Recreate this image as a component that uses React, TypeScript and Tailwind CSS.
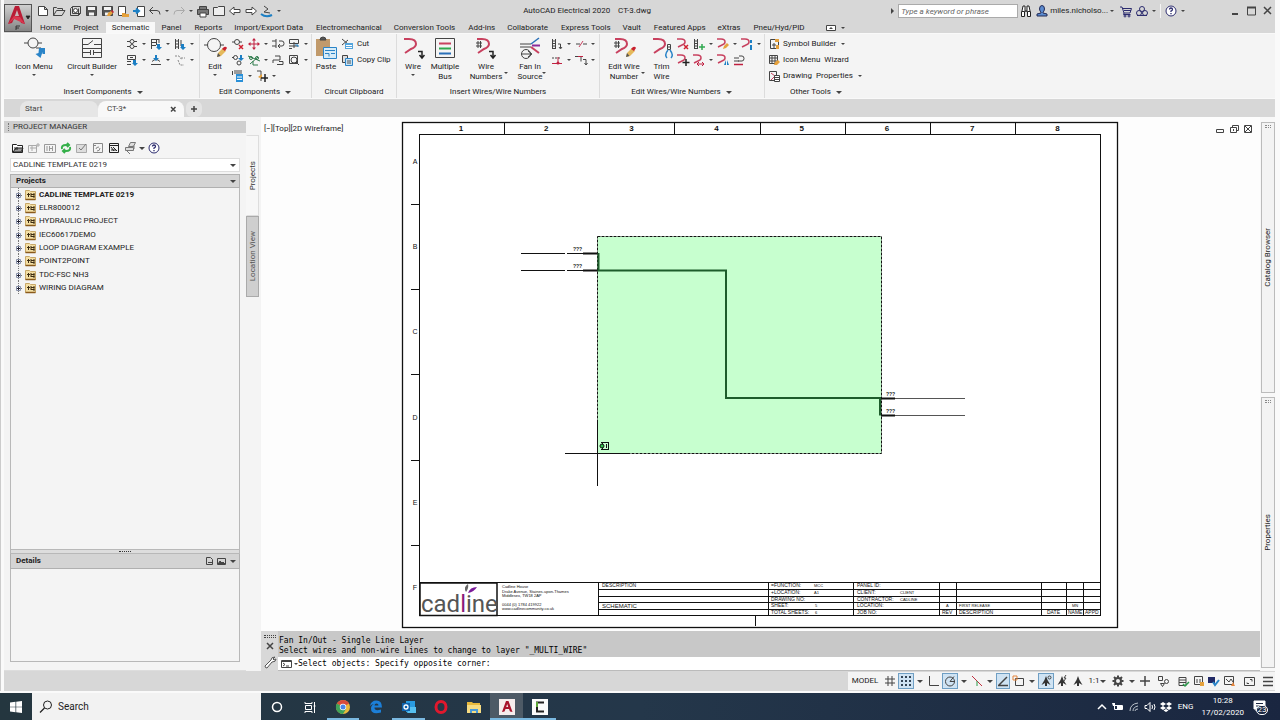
import type { ReactNode } from 'react';
import clsx from 'clsx';

type IconProps = { children: ReactNode; size?: 'sm' | 'lg'; stroke?: string };

const Icon = ({ children, size = 'sm', stroke = '#444' }: IconProps) => (
   <svg
      viewBox={size === 'sm' ? '0 0 16 16' : '0 0 24 24'}
      className={clsx('shrink-0', size === 'sm' ? 'size-4' : 'size-6')}
      fill="none"
      stroke={stroke}
      strokeWidth="1"
      aria-hidden="true"
   >
      {children}
   </svg>
);

const Caret = ({ className = 'w-2', large }: { className?: string; large?: boolean }) => (
   <span className={clsx('flex shrink-0 items-center justify-center', className)}>
      <svg
         viewBox="0 0 6 3"
         className={clsx(large ? 'h-[3px] w-1.5' : 'h-0.5 w-1')}
         fill="#444"
         aria-hidden="true"
      >
         <path d="M0 0h6L3 3z" />
      </svg>
   </span>
);

/* ---------- shared icon parts ---------- */

const pencil = (
   <g stroke="none">
      <path d="M14 21l1-4 5-5 3 3-5 5z" fill="#e5b95c" />
      <path d="M14 21l1-4 2.500 3z" fill="#555" />
      <path d="M19 13l2-2q2-1 3 1l-2 3z" fill="#c8202f" />
   </g>
);

const redWire = (
   <path d="M3 3h5q7 0 7 5 0 3-5 5l-6 4" stroke="#c8415f" strokeWidth="2" />
);

const miniWire = <path d="M2 3h4q4 0 4 3 0 2-3 3l-4 2" stroke="#c8415f" strokeWidth="1.500" />;

const folderIcon = (
   <g>
      <path d="M2.500 3.500h4l1 1h5v8h-10z" fill="#f4dfa4" stroke="#c8a868" />
      <path d="M2.500 12.500h10" stroke="#8a5a1c" strokeWidth="1.500" />
      <path d="M4 7.500h3M5.500 6v4M8 6v4M8 7.500h3.500M8 9.500h3.500M11 6v5" stroke="#3d2c12" />
   </g>
);

const helpIcon = (
   <g stroke="#2c2c6e">
      <circle cx="8" cy="8" r="5" fill="#fff" />
      <path d="M6.500 6.500q0-1.500 1.500-1.500t1.500 1.500q0 1-1.500 1.500v1M8 10v1.200" strokeWidth="1.300" />
   </g>
);

/* ---------- quick access toolbar ---------- */

const quickAccess: { label: string; icon: ReactNode; caret?: boolean }[] = [
   { label: 'New', icon: <path d="M3.500 3.500h6l3 3v6h-9zM9.500 3.500v3h3" fill="#fff" /> },
   { label: 'Open', icon: <path d="M2.500 12.500v-8h3l1 1h5v2M2.500 12.500l3-5h8.500l-3 5z" /> },
   {
      label: 'Project',
      icon: (
         <g>
            <path d="M3.500 5.500l2-2h8v7l-2 2h-8zM11.500 5.500v7M5.500 3.500v7h8" />
            <circle cx="8.500" cy="7.500" r="2" fill="#fff" />
         </g>
      ),
   },
   {
      label: 'Save',
      icon: (
         <g>
            <path d="M3.500 3.500h10v9h-10z" fill="#555" />
            <path d="M5 4h7v3H5zM6 9.500h5v3H6z" fill="#f4f4f4" stroke="none" />
         </g>
      ),
   },
   {
      label: 'Save As',
      icon: (
         <g>
            <path d="M3.500 3.500h10v9h-10z" fill="#555" />
            <path d="M5 4h7v3H5zM6 9.500h5v3H6z" fill="#f4f4f4" stroke="none" />
            <path d="M8 13l1-3 3-2 2 2-3 3z" fill="#e5a13c" stroke="none" />
            <path d="M12 8l1-1 2 2-1 1z" fill="#c8202f" stroke="none" />
         </g>
      ),
   },
   {
      label: 'Open from Web',
      icon: (
         <g>
            <path d="M3.500 3.500h7v9h-7z" fill="#fff" />
            <path d="M7 10h3l1 1h3v3H7z" fill="#e5a13c" stroke="none" />
         </g>
      ),
   },
   {
      label: 'Save to Web',
      icon: (
         <g>
            <path d="M6.500 3.500h7v10h-7z" fill="#fff" />
            <path d="M2 8h5M5 5.500L8 8l-3 2.500" stroke="#1c7fc4" strokeWidth="2" />
         </g>
      ),
   },
   { label: 'Undo', icon: <path d="M3 7.500h7q3 0 3 4M6 4L2.500 7.500 6 11" />, caret: true },
   { label: 'Redo', icon: <path d="M13 7.500H6q-3 0-3 4M10 4l3.500 3.500L10 11" stroke="#aaa" />, caret: true },
   {
      label: 'Plot',
      icon: (
         <g>
            <path d="M4.500 3.500h7v3h-7zM2.500 6.500h11v5h-11z" fill="#777" />
            <path d="M5 10h6v4H5z" fill="#fff" />
         </g>
      ),
   },
   { label: 'Folder', icon: <path d="M2.500 12.500v-8h4l1-1h6v9z" fill="#eee" /> },
   { label: 'Previous', icon: <path d="M2.500 8L7 4v2.500h6v3H7V12z" fill="#fff" /> },
   { label: 'Next', icon: <path d="M13.500 8L9 4v2.500H3v3h6V12z" fill="#fff" /> },
   {
      label: 'Surfer',
      icon: (
         <g>
            <path d="M5 3l4 3-4 3 6 1" />
            <path d="M2 11q5 4 11 1" stroke="#1c7fc4" strokeWidth="2" />
         </g>
      ),
      caret: true,
   },
];

const menuTabs = [
   'Home',
   'Project',
   'Schematic',
   'Panel',
   'Reports',
   'Import/Export Data',
   'Electromechanical',
   'Conversion Tools',
   'Add-ins',
   'Collaborate',
   'Express Tools',
   'Vault',
   'Featured Apps',
   'eXtras',
   'Pneu/Hyd/PID',
];

const AppButton = () => (
   <button
      aria-label="Application menu"
      className="flex h-7 w-7 shrink-0 items-center justify-center border border-[#555] bg-linear-to-b from-[#d0d0d0] to-[#858585]"
   >
      <svg viewBox="0 0 26 26" className="size-[26px]" aria-hidden="true">
         <path d="M3 19L10 1h4l6 18-4-1-1.500-4H9l-2 4z" fill="#b91c35" />
         <path d="M9.800 11L12 5l2 6z" fill="#c9b5b8" />
         <path d="M3 19l6-5 11 5-5-7-6-1z" fill="#d93850" />
         <path d="M21 11h4l-2 3zM11 21h4M11 21v4M11 23h3" fill="#222" stroke="#222" strokeWidth=".8" />
      </svg>
   </button>
);

function Header() {
   return (
      <header className="flex items-start bg-[#d7d7d7] pt-1">
         <AppButton />
         <div className="min-w-0 flex-1">
            <div className="flex h-3.5 items-center">
               <div className="flex pl-[3px]">
                  {quickAccess.map((q) => (
                     <button key={q.label} aria-label={q.label} className="flex items-center">
                        <Icon>{q.icon}</Icon>
                        {q.caret && <Caret />}
                     </button>
                  ))}
               </div>
               <h1 className="flex-1 whitespace-pre text-center">AutoCAD Electrical 2020    CT-3.dwg</h1>
               <div className="flex items-center">
                  <svg viewBox="0 0 3 6" className="mr-1 h-1.5 w-[3px]" fill="#444" aria-hidden="true">
                     <path d="M0 0v6l3-3z" />
                  </svg>
                  <input
                     aria-label="Search help"
                     placeholder="Type a keyword or phrase"
                     className="h-3.5 w-[120px] border border-[#aaa] bg-white px-0.5 italic placeholder:text-[#666]"
                  />
                  <button aria-label="Find" className="flex">
                     <Icon stroke="#222">
                        <path d="M3.500 8.500h3v5h-3zM9.500 8.500h3v5h-3zM4 8l1-5h2v6M12 8l-1-5H9v6M7 8h2" fill="#fff" />
                     </Icon>
                  </button>
                  <button className="flex items-center">
                     <Icon stroke="#222a55">
                        <path d="M5.500 6q0-3.500 2.500-3.500T10.500 6Q10 9 9 9v1l4 1v2H3v-2l4-1V9Q6 9 5.500 6z" fill="#5b8bd0" />
                     </Icon>
                     miles.nicholso...
                     <Caret />
                  </button>
                  <button aria-label="App store" className="ml-0.5 flex">
                     <Icon stroke="#2c2c6e">
                        <path d="M2 4h2l2 6h6l1.500-4.500H5M6 7.500h7M6 10l-.5 1.500h7" />
                        <circle cx="7" cy="13" r="1" />
                        <circle cx="11" cy="13" r="1" />
                     </Icon>
                  </button>
                  <button aria-label="Autodesk apps" className="flex">
                     <Icon stroke="#2c2c6e">
                        <circle cx="8" cy="6" r="2.500" />
                        <circle cx="5" cy="10" r="2.500" />
                        <circle cx="11" cy="10" r="2.500" />
                        <path d="M3 12.500h10" />
                     </Icon>
                     <Caret />
                  </button>
                  <span className="mx-0.5 h-3.5 w-px bg-[#f4f4f4]" />
                  <button aria-label="Help" className="flex">
                     <Icon>{helpIcon}</Icon>
                     <Caret />
                  </button>
                  <div className="ml-10 flex">
                     <button aria-label="Minimize" className="flex">
                        <Icon><path d="M5 11h6" strokeWidth="2" /></Icon>
                     </button>
                     <button aria-label="Maximize" className="flex">
                        <Icon><path d="M4.500 4v8h8V4" /><path d="M4 4.500h9" strokeWidth="2" /></Icon>
                     </button>
                     <button aria-label="Close" className="flex">
                        <Icon><path d="M5 4l7 7M12 4l-7 7" strokeWidth="1.500" /></Icon>
                     </button>
                  </div>
               </div>
            </div>
            <nav className="mt-1 flex items-center pl-0.5">
               {menuTabs.map((tab) => (
                  <a
                     key={tab}
                     href="#"
                     className={clsx(
                        'flex h-[11px] items-center whitespace-nowrap px-1.5 even:mr-px',
                        tab === 'Schematic' && 'bg-[#f8f8f8]',
                     )}
                  >
                     {tab}
                  </a>
               ))}
               <button aria-label="Minimize ribbon" className="ml-3 flex h-[11px] items-center">
                  <Icon><path d="M3.500 5.500h9v5h-9z" fill="#fff" /><path d="M6 9h4L8 7z" fill="#444" stroke="none" /></Icon>
                  <Caret />
               </button>
            </nav>
         </div>
      </header>
   );
}

/* ---------- ribbon ---------- */

type BigProps = {
   label: string[];
   width: string;
   caret?: boolean;
   sideCaret?: boolean;
   children: ReactNode;
};

const BigButton = ({ label, width, caret, sideCaret, children }: BigProps) => (
   <button className={clsx('relative flex shrink-0 flex-col items-center whitespace-nowrap leading-[10px]', width)}>
      <Icon size="lg">{children}</Icon>
      <span className="mt-0.5">{label[0]}</span>
      {label[1] && <span>{label[1]}</span>}
      {caret && <Caret className="mt-0.5 w-2" />}
      {sideCaret && <span className="absolute right-px bottom-2"><Caret /></span>}
   </button>
);

type Tool = ReactNode | 'caret';

const ToolGrid = ({ rows }: { rows: Tool[][] }) => (
   <div className="flex flex-col">
      {rows.map((row, i) => (
         <div key={i} className="flex h-4">
            {row.map((tool, j) =>
               tool === 'caret' ? (
                  <Caret key={j} />
               ) : (
                  <button key={j} aria-label={`Tool ${i + 1}.${j + 1}`} className="flex">
                     <Icon>{tool}</Icon>
                  </button>
               ),
            )}
         </div>
      ))}
   </div>
);

const RibbonPanel = ({ title, width, caret, children }: { title: string; width: string; caret?: boolean; children: ReactNode }) => (
   <section className={clsx('flex shrink-0 flex-col justify-between border-r border-[#dcdcdc] pt-0.5 pb-px', width)}>
      <div className="flex items-start">{children}</div>
      <h2 className="flex items-center justify-center gap-1 leading-[10px]">
         {title}
         {caret && <Caret large />}
      </h2>
   </section>
);

const blueArrow = <path d="M9 8h3v3h2l-3 3-3-3h1z" fill="#1c7fc4" stroke="none" />;

const insertTools: Tool[][] = [
   [
      <g><circle cx="8" cy="5.500" r="2" /><circle cx="8" cy="10.500" r="2" /><path d="M3 5.500h3M10 5.500h3M3 10.500h3M10 10.500h3" /></g>,
      'caret',
      <g><path d="M3.500 3v10M8.500 3v6M3 3.500h8M3 6.500h6M3 9.500h5M11 3v4" />{blueArrow}</g>,
      'caret',
      <g><path d="M3.500 3v10M6.500 3v10M3 5h4M3 8h4M3 11h4M9 4v6" />{blueArrow}</g>,
      'caret',
   ],
   [
      <g><path d="M3.500 3.500h8v4h-8zM3 9.500h4M3 12.500h4M6 5.500h3" />{blueArrow}</g>,
      'caret',
      <g><path d="M3 12.500h10M4 9.500q4-4 8 0" /><path d="M7 3h2v3h2L8 9 5 6h2z" fill="#1c7fc4" stroke="none" /></g>,
      'caret',
      <g stroke="#888"><path d="M3 4h4l3 4M6 8l2 5h4M9 6h4" strokeDasharray="2 1" /></g>,
      'caret',
   ],
];

const editTools: Tool[][] = [
   [
      <g><circle cx="7" cy="6" r="2.500" /><path d="M2 6h2.500M9.500 6H12" /><path d="M9 9l4 4M13 9l-4 4" stroke="#d02030" strokeWidth="1.500" /></g>,
      <g stroke="#c02040" fill="#c02040"><path d="M8 4v8M4 8h8" /><path d="M8 2l2 2.500H6zM8 14l2-2.500H6zM2 8l2.500-2v4zM14 8l-2.500-2v4z" stroke="none" /></g>,
      'caret',
      <g><path d="M2 5h4M2 10h4M6 3v9M9 5h3q2 0 2 2.500T12 10H8M10 8l-2 2 2 2" /></g>,
      <g><path d="M3.500 3.500h9v4h-9zM3 10h9M3 12.500h3M8 6v6" /><path d="M9 9h3v2" stroke="#1c7fc4" /></g>,
      'caret',
   ],
   [
      <g><circle cx="5.500" cy="5.500" r="2" /><circle cx="9" cy="11" r="2" /><path d="M2 5.500h2" /><path d="M10 3h2v3h2l-3 3-3-3h2z" fill="#1c7fc4" stroke="none" /></g>,
      <g stroke="#2d7a4a"><circle cx="5" cy="6" r="1.500" /><circle cx="11" cy="6" r="1.500" /><path d="M2 4l12 5M4 12l8-7M7 9v4h5" /></g>,
      'caret',
      <g><path d="M3 11V8h7V4M10 4H5M9 9.500h4v3h-6" /></g>,
      <g><path d="M3.500 3.500h8v8h-8z" /><circle cx="8" cy="8" r="3" /><path d="M10 10l3 3" /></g>,
      'caret',
   ],
   [
      <g><path d="M4 3h8M4 5h8M2.500 3v4" /><path d="M6 6h7v8H6z" fill="#2a90d8" stroke="none" /><path d="M7 9h5M7 11.500h5" stroke="#fff" /></g>,
      'caret',
      <g><path d="M3 3h4v10" /><path d="M4 9l4-3v5z" fill="#e5a13c" stroke="none" /><path d="M11 6v8M7 10h7" stroke="#222" strokeWidth="1.500" /></g>,
      'caret',
   ],
];

const insertWireTools: Tool[][] = [
   [
      <g><path d="M3.500 3v10M6.500 3v10M3 5h4M3 7.500h4M3 10h4M3 12.500h4M9 8h2.500v4M10 11l1.500 2 1.500-2" /></g>,
      'caret',
      <g><path d="M3 8h4M10 8h4" /><path d="M6 11l4-6" stroke="#c8415f" /></g>,
      'caret',
   ],
   [
      <g><path d="M3 6h8" strokeDasharray="2 1" /><path d="M3 11.500h10M9 5v6" stroke="#c02040" /><circle cx="9" cy="11" r="1.500" fill="#c02040" stroke="none" /></g>,
      'caret',
      <g><path d="M2 4.500h6v5M10 7.500h3v5M11.500 11l1.500 2 1.500-2" /><path d="M5 4.500h5" stroke="#c02040" /></g>,
      'caret',
   ],
];

const editWireTools: Tool[][] = [
   [
      <g>{miniWire}<path d="M9 9l4 4M13 9l-4 4" stroke="#d02030" strokeWidth="1.500" /></g>,
      <g><path d="M3.500 3v10M6.500 3v10M3 5h4M3 7.500h4M3 10h4M3 12.500h4" /><path d="M11 8v6M8 11h6" stroke="#2fa84f" strokeWidth="1.500" /></g>,
      'caret',
      <g>{miniWire}<path d="M8 13l1-3 3-3 2 2-3 3z" fill="#e5a13c" stroke="none" /></g>,
      'caret',
      <g>{miniWire}<path d="M12 4v3M12 9v5" stroke="#1c7fc4" strokeWidth="2" /></g>,
      'caret',
   ],
   [
      <g>{miniWire}<path d="M11 7v7M7.500 10.500h7" stroke="#222" strokeWidth="1.500" /></g>,
      <g>{miniWire}<path d="M6 12h7M8 10l-2 2 2 2M11 10l2 2-2 2" stroke="#c02040" /></g>,
      'caret',
      <g>{miniWire}<path d="M9 13l2-5v5zM12 8v5h2z" fill="#1c7fc4" stroke="none" /></g>,
      <g><path d="M3 6h5M3 9h5M8 4h3q2 0 2 2.500T11 9H7" /><path d="M3 12.500h9" stroke="#c02040" strokeWidth="1.500" /></g>,
   ],
];

const TextTool = ({ label, caret, icon }: { label: string; caret?: boolean; icon: ReactNode }) => (
   <button className="flex h-4 items-center gap-px whitespace-pre">
      <Icon>{icon}</Icon>
      <span>{label}</span>
      {caret && <Caret className="ml-0.5 w-2" />}
   </button>
);

function Ribbon() {
   return (
      <div className="flex h-[66px] border-y border-[#f9f9f9] bg-[#f4f4f4]">
         <RibbonPanel title="Insert Components" width="w-[196px] pl-1" caret>
            <BigButton label={['Icon Menu']} width="w-13" caret>
               <circle cx="11" cy="7" r="5" />
               <path d="M2 7h4M16 7h4M14 12h5" />
               <path d="M17 12h6v6h-2.500v-2l-2 6-5-4 3-1z" fill="#2a84c8" stroke="none" />
            </BigButton>
            <BigButton label={['Circuit Builder']} width="w-16" caret>
               <path d="M2.500 2.500h19v19h-19zM3 8.500h5l5-4M14 8.500h8M3 16.500h7M14 16.500h8M10.500 14v5M13.500 14v5M3 12.500h19" />
            </BigButton>
            <ToolGrid rows={insertTools} />
         </RibbonPanel>
         <RibbonPanel title="Edit Components" width="w-28" caret>
            <BigButton label={['Edit']} width="w-[30px]" caret>
               <circle cx="11" cy="9" r="6.500" />
               <path d="M1 9h3.500M17.500 9H21" />
               {pencil}
            </BigButton>
            <ToolGrid rows={editTools} />
         </RibbonPanel>
         <RibbonPanel title="Circuit Clipboard" width="w-[85px]">
            <BigButton label={['Paste']} width="w-7">
               <path d="M2 3h14v17H2z" fill="#c19a6b" stroke="none" />
               <path d="M6 4q0-3 3-3t3 3z" fill="#555" />
               <path d="M9.500 11.500h13v11h-13z" fill="#d7ecf8" stroke="#2a84c8" />
               <path d="M11 14.500h10M11 17.500h4v3M17 17.500h4" stroke="#2a84c8" />
            </BigButton>
            <div>
               <TextTool
                  label="Cut"
                  icon={<g><path d="M2 3l6 5M2 9l6-5" /><path d="M5 7h8v6H5z" fill="#55a5dc" stroke="none" /><path d="M6 9.500h6M6 11.500h6" stroke="#fff" /></g>}
               />
               <TextTool
                  label="Copy Clip"
                  icon={<g><path d="M2.500 3.500h5v7h-5z" fill="#ddd" /><path d="M5.500 6.500h7v7h-7z" fill="#c5e1f3" stroke="#2a84c8" /><path d="M7 9h4M7 11h4" stroke="#555" /></g>}
               />
            </div>
         </RibbonPanel>
         <RibbonPanel title="Insert Wires/Wire Numbers" width="w-[203px]">
            <BigButton label={['Wire']} width="w-8" caret>
               {redWire}
               <path d="M17 15.500h4v6M18.500 19l2.500 3 2.500-3" stroke="#222" strokeWidth="1.500" />
            </BigButton>
            <BigButton label={['Multiple', 'Bus']} width="w-8">
               <path d="M2.500 2.500h19v19h-19z" />
               <path d="M6 7.500h12" stroke="#c8415f" strokeWidth="2" />
               <path d="M6 12.500h12" stroke="#2fa84f" strokeWidth="2" />
               <path d="M6 17.500h12" stroke="#2a70b8" strokeWidth="2" />
            </BigButton>
            <BigButton label={['Wire', 'Numbers']} width="w-[50px]" sideCaret>
               {redWire}
               <path d="M2 7h6M2 10h6M4 5v7M6.500 5v7" />
               <path d="M15 15.500h4v6M16.500 19l2.500 3 2.500-3" stroke="#222" strokeWidth="1.500" />
            </BigButton>
            <BigButton label={['Fan In', 'Source']} width="w-[38px]" sideCaret>
               <path d="M2 8h11M2 11h11" />
               <path d="M13 8l8-6" stroke="#2a70b8" strokeWidth="1.500" />
               <path d="M14 9.500h8" stroke="#8a2a9a" strokeWidth="2" />
               <path d="M13 11l8 6" stroke="#c8415f" strokeWidth="2" />
               <circle cx="8" cy="18" r="4.500" />
               <path d="M3 18h10M10 15l4 3-4 3" />
            </BigButton>
            <ToolGrid rows={insertWireTools} />
         </RibbonPanel>
         <RibbonPanel title="Edit Wires/Wire Numbers" width="w-[165px]" caret>
            <BigButton label={['Edit Wire', 'Number']} width="w-12" sideCaret>
               {redWire}
               <path d="M2 7h6M2 10h6M4 5v7M6.500 5v7" />
               {pencil}
            </BigButton>
            <BigButton label={['Trim', 'Wire']} width="w-[27px]">
               {redWire}
               <path d="M17.500 8.500h3v5h-3zM17.500 11h3" />
               <path d="M18 14q-4 5-1 8M20 14q4 5 1 8" stroke="#2a84c8" strokeWidth="1.500" />
            </BigButton>
            <ToolGrid rows={editWireTools} />
         </RibbonPanel>
         <RibbonPanel title="Other Tools" width="w-[102px] border-r-0 pl-px" caret>
            <div>
               <TextTool
                  label="Symbol Builder"
                  caret
                  icon={<g><path d="M4.500 3.500h8v9h-8zM6 9h4M8 7v5" /><path d="M9 3h4v3H9zM10 9h3v4h-3z" fill="#e5a13c" stroke="none" /></g>}
               />
               <TextTool
                  label="Icon Menu  Wizard"
                  icon={<g><path d="M3.500 3.500h8v8h-8zM6 3v9M9 3v9M3 6h9M3 9h9" /><path d="M8 13l1-3 3-2 2 2-3 3z" fill="#e5a13c" stroke="none" /></g>}
               />
               <TextTool
                  label="Drawing  Properties"
                  caret
                  icon={<g><path d="M3.500 3.500h7v9h-7z" /><path d="M5 5l4 3-4 4" stroke="#c8415f" /><path d="M8.500 7.500h5v6h-5z" fill="#fff" /><path d="M9 9.500h4M9 11.500h4" /></g>}
               />
            </div>
         </RibbonPanel>
      </div>
   );
}

function FileTabs() {
   return (
      <div className="flex h-[18px] items-end bg-[#d7d7d7] pl-4 text-[#444]">
         <a href="#" className="flex h-4 w-[78px] items-center rounded-t-lg bg-[#e6e6e6] pl-[5px]">
            Start
         </a>
         <a href="#" className="flex h-4 w-[86px] items-center justify-between rounded-t-lg bg-[#f8f8f8] pr-[3px] pl-[9px]">
            CT-3*
            <Icon><path d="M6 6l4.500 4.500M10.500 6L6 10.500" strokeWidth="1.500" /></Icon>
         </a>
         <button aria-label="New tab" className="ml-0.5 flex h-4 items-center rounded-md bg-[#e4e4e4]">
            <Icon><path d="M8 5v6M5 8h6" strokeWidth="1.500" /></Icon>
         </button>
      </div>
   );
}

/* ---------- project manager ---------- */

const projects = [
   'CADLINE TEMPLATE 0219',
   'ELR800012',
   'HYDRAULIC PROJECT',
   'IEC60617DEMO',
   'LOOP DIAGRAM EXAMPLE',
   'POINT2POINT',
   'TDC-FSC NH3',
   'WIRING DIAGRAM',
];

const managerTools: { label: string; icon: ReactNode }[] = [
   { label: 'Open project', icon: <g stroke="#222"><path d="M2.500 4.500h4l1 1h5v7h-10z" fill="#fff" /><path d="M3 12l3-4h7l-2 4zM5 7v3M7 7v3" fill="#999" /></g> },
   { label: 'New project', icon: <g stroke="#aaa"><path d="M2.500 5.500h8v7h-8zM4 8h6M6 6v5" /><path d="M12 3v4M10 5h4" /></g> },
   { label: 'New drawing', icon: <g stroke="#999"><path d="M2.500 4.500h11v8h-11zM5 6v5M7.500 6v5M7.500 8.500h3M10.500 6v5" /></g> },
   { label: 'Refresh', icon: <g stroke="#35b04a" strokeWidth="2"><path d="M4 9q-1-4 4-4h3M9 3l2 2-2 2M12 7q1 4-4 4H6M7 9l-2 2 2 2" /></g> },
   { label: 'Task list', icon: <g stroke="#aaa"><path d="M2.500 4.500h10v8h-10z" fill="#ddd" /><path d="M5 8l2 2 5-6" stroke="#777" /></g> },
   { label: 'Update', icon: <g stroke="#888"><path d="M3.500 3.500h9v9h-9zM3 5.500h3" /><path d="M6 9q0-2 3-2M10 8q0 3-3 3" /></g> },
   { label: 'Drawing list', icon: <g stroke="#222"><path d="M3.500 3.500h9v9h-9zM3 5.500h10" /><path d="M5 7l3 4M7 7l4 4M5 10h5" /></g> },
   { label: 'Publish', icon: <g stroke="#777"><path d="M6.500 6.500l2-4h5l-2 4zM3.500 7.500h8v3h-8z" fill="#ddd" /><path d="M5 11l3 3M8 7l4-1v3" /></g> },
];

const SideTab = ({ label, active }: { label: string; active?: boolean }) => (
   <button
      className={clsx(
         'flex h-[81px] w-[13px] items-center justify-center border',
         active ? 'border-[#ddd] border-l-[#f7f7f7] bg-[#f7f7f7] text-[#333]' : 'border-[#aaa] bg-[#cfcfcf] text-[#555]',
      )}
   >
      <span className="rotate-180 whitespace-nowrap [writing-mode:vertical-rl]">{label}</span>
   </button>
);

function ProjectManager() {
   return (
      <aside className="flex w-[257px] shrink-0 bg-[#f4f4f4] pt-1">
         <div className="flex flex-1 flex-col border-b border-[#ddd]">
            <h2 className="flex h-3 items-center gap-1 bg-[#cfcfcf] pl-1 text-[#333]">
               <span className="h-2 w-px border-l border-dotted border-[#777]" />
               PROJECT MANAGER
            </h2>
            <div className="flex flex-1 flex-col pr-1.5 pb-2 pl-1.5">
               <div className="flex items-center pt-[7px] pb-0.5">
                  {managerTools.map((t) => (
                     <button key={t.label} aria-label={t.label} className="flex">
                        <Icon>{t.icon}</Icon>
                     </button>
                  ))}
                  <Caret large />
                  <button aria-label="Help" className="flex">
                     <Icon>{helpIcon}</Icon>
                  </button>
               </div>
               <div className="relative mb-0.5 flex h-3.5 items-center border border-[#ddd] bg-white">
                  <select aria-label="Current project" className="w-full appearance-none bg-transparent pl-0.5 text-[#333]">
                     <option>CADLINE TEMPLATE 0219</option>
                  </select>
                  <span className="pointer-events-none absolute right-0.5"><Caret large /></span>
               </div>
               <h3 className="flex h-3.5 items-center justify-between border border-[#b0b0b0] bg-[#d4d4d4] pr-0.5 pl-[5px] font-bold">
                  Projects
                  <Caret large />
               </h3>
               <ul className="flex-1 border-x border-[#b8b8b8]">
                  {projects.map((name, i) => (
                     <li key={name} className={clsx('flex h-[13px] items-center nth-[3n]:h-3.5', i === 0 && 'font-bold')}>
                        <svg viewBox="0 0 12 14" className="h-3.5 w-3 shrink-0" fill="none" stroke="#777" aria-hidden="true">
                           <path d="M7.500 0v14M10 7.500h2" strokeDasharray="1 1" />
                           <path d="M5.500 5.500h4v4h-4z" fill="#fff" stroke="#8890a8" />
                           <path d="M6 7.500h3M7.500 6v3" stroke="#223" />
                        </svg>
                        <Icon>{folderIcon}</Icon>
                        <span>{name}</span>
                     </li>
                  ))}
               </ul>
               <div className="flex h-[5px] items-center justify-center border border-[#b8b8b8] bg-[#ddd]">
                  <span className="w-3 border-t border-dotted border-[#333]" />
               </div>
               <h3 className="flex h-[15px] items-center border border-t-0 border-[#b0b0b0] bg-[#d4d4d4] pr-0.5 pl-[5px] font-bold">
                  <span className="flex-1">Details</span>
                  <button aria-label="Details" className="-mr-1 flex">
                     <Icon><path d="M5.500 4.500h4l2 2v5h-6zM7 9.500h5" /></Icon>
                  </button>
                  <button aria-label="Preview" className="flex">
                     <Icon><path d="M4.500 5.500h8v6h-8z" /><path d="M5 11l2-3 2 2 1-1 2 2z" fill="#444" /></Icon>
                  </button>
                  <Caret large />
               </h3>
               <div className="h-[93px] border border-t-0 border-[#b8b8b8]" />
            </div>
         </div>
         <div className="flex w-[15px] flex-col pt-3.5">
            <SideTab label="Projects" active />
            <SideTab label="Location View" />
         </div>
      </aside>
   );
}

/* ---------- drawing ---------- */

const zoneX = [504, 589, 674, 760, 845, 930, 1015];
const zoneY = [204, 289, 374, 460, 545];
const titleRows = [589, 596, 602, 609];

const blockText: [number, number, string][] = [
   [771, 587, '=FUNCTION:'],
   [771, 594, '+LOCATION:'],
   [771, 601, 'DRAWING NO:'],
   [771, 607, 'SHEET:'],
   [771, 614, 'TOTAL SHEETS:'],
   [857, 587, 'PANEL ID:'],
   [857, 594, 'CLIENT:'],
   [857, 601, 'CONTRACTOR:'],
   [857, 607, 'LOCATION:'],
   [857, 614, 'JOB NO:'],
   [942, 614, 'REV'],
   [959, 614, 'DESCRIPTION'],
   [1047, 614, 'DATE'],
   [1068, 614, 'NAME'],
   [1085, 614, 'APPD'],
   [602, 587, 'DESCRIPTION'],
];

const blockValues: [number, number, string][] = [
   [814, 587, 'MCC'],
   [814, 594, 'A1'],
   [815, 607, '5'],
   [815, 614, '6'],
   [900, 594, 'CLIENT'],
   [900, 601, 'CADLINE'],
   [946, 607, 'A'],
   [959, 607, 'FIRST RELEASE'],
   [1072, 607, 'MN'],
];

const addressLines: [number, string][] = [
   [588, 'Cadline House'],
   [593, 'Drake Avenue, Staines-upon-Thames'],
   [597, 'Middlesex, TW18 2AP'],
   [606, '0044 (0) 1784 419922'],
   [610, 'www.cadlinecommunity.co.uk'],
];

const Sheet = () => (
   <svg viewBox="261 117 999 514" className="h-full w-full" role="img" aria-label="CT-3 schematic" fill="none" stroke="#111">
      <rect x="402.500" y="122.500" width="715" height="505" fill="#fff" strokeWidth="1.300" />
      <rect x="419.500" y="134.500" width="681" height="481" />
      {zoneX.map((x) => (
         <path key={x} d={`M${x + 0.5} 123v11`} />
      ))}
      {zoneY.map((y) => (
         <path key={y} d={`M411 ${y + 0.5}h8`} />
      ))}
      <path d="M755.500 616v10" />
      <g fill="#111" stroke="none" fontSize="8" textAnchor="middle" fontWeight="bold">
         {['1', '2', '3', '4', '5', '6', '7', '8'].map((n, i) => (
            <text key={n} x={461 + i * 85.2} y="131">{n}</text>
         ))}
      </g>
      <g fill="#111" stroke="none" fontSize="7" textAnchor="middle">
         {['A', 'B', 'C', 'D', 'E', 'F'].map((n, i) => (
            <text key={n} x="415" y={164 + i * 85.2}>{n}</text>
         ))}
      </g>

      {/* title block */}
      <path d="M420 582.500h681M598.500 582v34M768.500 582v34M853.500 582v34M939.500 582v34M956.500 582v34M1041.500 582v34M1066.500 582v34M1083.500 582v34" />
      {titleRows.map((y) => (
         <path key={y} d={`M599 ${y + 0.5}h502`} />
      ))}
      <rect x="420" y="583" width="77" height="32.500" strokeWidth="1.500" />
      <text x="421" y="612" fontSize="24" stroke="none" fill="#555" className="font-[Roboto,sans-serif]">
         cad<tspan fill="#8a1a7c">l</tspan>ine
      </text>
      <path d="M466 592q-3-5 2-8q1 4-2 8z" fill="#666" stroke="none" />
      <path d="M468 593q2-6 9-6q-3 5-9 6z" fill="#7a1a9a" stroke="none" />
      <g fill="#111" stroke="none" fontSize="5">
         {blockText.map(([x, y, t]) => (
            <text key={`${x}-${y}`} x={x} y={y}>{t}</text>
         ))}
      </g>
      <g fill="#111" stroke="none" fontSize="4">
         {blockValues.map(([x, y, t]) => (
            <text key={`${x}-${y}`} x={x} y={y}>{t}</text>
         ))}
         {addressLines.map(([y, t]) => (
            <text key={y} x="502" y={y}>{t}</text>
         ))}
      </g>
      <text x="602" y="608" fontSize="6" stroke="none" fill="#111">SCHEMATIC</text>

      {/* crossing selection */}
      <rect x="597.500" y="236.500" width="284" height="217" fill="#c7ffcf" strokeDasharray="3 1" />

      {/* wires */}
      <path d="M521 253.500h44M567 253.500h18M521 270.500h44M567 270.500h18" />
      <path d="M583 253.500h15M583 270.500h15M881 398.500h14M881 415.500h14" strokeWidth="2" />
      <path d="M895 398.500h70M895 415.500h70" stroke="#555" />
      <path d="M598.500 253v17.500H726V398h154v17.500" stroke="#1d5c2b" strokeWidth="2" />
      <g fill="#111" stroke="none" fontSize="5" fontWeight="bold">
         <text x="573" y="251">???</text>
         <text x="573" y="268">???</text>
         <text x="886" y="396">???</text>
         <text x="886" y="413">???</text>
      </g>

      {/* crosshair */}
      <path d="M565 453.500h65M597.500 421v65" />
      <path d="M601 442.500h8M601 449.500h8M602.500 442v7M608.500 442v8M606.500 444v4" />
      <circle cx="602" cy="446" r="2" fill="#2fc04a" />
   </svg>
);

function CommandLine() {
   return (
      <div className="flex h-10 bg-[#c8c8c8] font-['DejaVu_Sans_Mono',monospace] text-black">
         <div className="flex w-[17px] flex-col items-center bg-[#d8d8d8] pt-1">
            <span className="h-[3px] w-3 border-y border-dotted border-[#444]" />
            <button aria-label="Close command line" className="flex">
               <Icon><path d="M5 5l6 6M11 5l-6 6" strokeWidth="1.500" /></Icon>
            </button>
            <button aria-label="Customize" className="flex">
               <Icon stroke="#555"><path d="M3 12l6-6q0-3 4-3l-2 2 1 1 2-1q0 3-4 3l-5 6q-2 0-2-2z" fill="#fff" /></Icon>
            </button>
         </div>
         <div className="flex flex-1 flex-col">
            <p className="flex-1 whitespace-pre-line pt-[5px] pl-px leading-[10px]">
               {'Fan In/Out - Single Line Layer\nSelect wires and non-wire Lines to change to layer "_MULTI_WIRE"'}
            </p>
            <label className="flex h-3.5 items-center border-b border-[#bbb] bg-white">
               <Icon><path d="M3.500 4.500h10v7h-10zM3 5.500h11M5 7l2 1.500L5 10M8 10h3" /></Icon>
               <Caret className="w-1" />
               <input
                  aria-label="Command"
                  defaultValue="Select objects: Specify opposite corner:"
                  className="flex-1 bg-transparent outline-none"
               />
            </label>
         </div>
      </div>
   );
}

const DockPanel = ({ label }: { label: string }) => (
   <button className="relative flex flex-1 items-center justify-center border border-[#bbb] bg-[#f3f3f3]">
      <span className="absolute top-0.5 h-[3px] w-1.5 border-y border-dotted border-[#888]" />
      <span className="rotate-180 whitespace-nowrap [writing-mode:vertical-rl]">{label}</span>
   </button>
);

function Workspace() {
   return (
      <main className="flex min-h-0 flex-1 bg-[#f8f8f8]">
         <ProjectManager />
         <div className="flex min-w-0 flex-1 flex-col">
            <div className="relative min-h-0 flex-1 bg-[#fdfdfd] font-['Liberation_Sans',sans-serif]">
               <Sheet />
               <span className="absolute top-1.5 left-[3px] font-[Roboto,sans-serif]">[−][Top][2D Wireframe]</span>
               <div className="absolute top-1 right-1 flex">
                  <button aria-label="Minimize drawing" className="-mr-0.5 flex">
                     <Icon><path d="M4.500 8.500h7v3h-7z" /></Icon>
                  </button>
                  <button aria-label="Restore drawing" className="-mr-0.5 flex">
                     <Icon><path d="M4.500 6.500h6v5h-6zM6.500 6V4.500h6v5H11M7.500 8v2" /></Icon>
                  </button>
                  <button aria-label="Close drawing" className="flex">
                     <Icon><path d="M4.500 4.500h7v7h-7zM5 5l6 6M11 5l-6 6" /></Icon>
                  </button>
               </div>
            </div>
            <CommandLine />
         </div>
         <div className="flex w-[15px] shrink-0 flex-col gap-1 pt-[5px] pb-[3px] pl-px">
            <DockPanel label="Catalog Browser" />
            <DockPanel label="Properties" />
         </div>
      </main>
   );
}

/* ---------- status bar ---------- */

const person = 'M8 3l1.500 4 3 5-3.500-2v3H7v-3l-3.500 2 3-5z';

type StatusItem = { icon?: ReactNode; text?: string; width: string; active?: boolean; caret?: boolean };

const statusItems: StatusItem[] = [
   { text: 'MODEL', width: 'w-[34px]' },
   { icon: <path d="M6 3v10M10 3v10M3 6h10M3 10h10" />, width: 'w-4' },
   { icon: <path d="M3 4h10M3 8h10M3 12h10" stroke="#345" strokeWidth="2" strokeDasharray="2 2" />, width: 'w-4', active: true },
   { caret: true, width: 'w-3' },
   { icon: <path d="M3.500 3v9.500H13" />, width: 'w-4' },
   { icon: <g><circle cx="8" cy="8.500" r="4.500" /><path d="M8 8.500l4-5M8 8.500h5" /></g>, width: 'w-4', active: true },
   { caret: true, width: 'w-3' },
   { icon: <g><path d="M3 3l10 10" stroke="#c03040" /><path d="M8 13V8" stroke="#2a9a4a" /></g>, width: 'w-3.5' },
   { caret: true, width: 'w-3' },
   { icon: <path d="M3 12.500h10M4 12l8-8" strokeWidth="1.500" />, width: 'w-3.5', active: true },
   { icon: <g><path d="M5.500 5.500h8v7h-8z" /><path d="M3 3h4v4H3z" stroke="#e5853c" /></g>, width: 'w-4' },
   { caret: true, width: 'w-3' },
   { icon: <g><path d={person} fill="#333" stroke="none" /><circle cx="11.500" cy="4.500" r="1.500" /></g>, width: 'w-4', active: true },
   { icon: <g><path d={person} fill="#333" stroke="none" /><path d="M12 2l-2 3h2l-2 3" /></g>, width: 'w-4' },
   { icon: <path d={person} fill="#333" stroke="none" />, width: 'w-4' },
   { text: '1:1', caret: true, width: 'w-6' },
   { icon: <g><circle cx="8" cy="8" r="3" strokeWidth="2" /><path d="M8 2.500v2M8 11.500v2M2.500 8h2M11.500 8h2M4 4l1.500 1.500M10.500 10.500L12 12M12 4l-1.500 1.500M5.500 10.500L4 12" strokeWidth="2" /></g>, width: 'w-4' },
   { caret: true, width: 'w-3' },
   { icon: <path d="M8 3v10M3 8h10" strokeWidth="1.500" />, width: 'w-3.5' },
   { icon: <g><path d="M3.500 3.500h4v4h-4zM7.500 13.500l-2-3h4z" /><circle cx="11.500" cy="8.500" r="2" /></g>, width: 'w-[22px]' },
   { icon: <g><path d="M4 4.500h7v8H4zM4 7h7M4 9.500h7" /><path d="M8 11l2 2 4-4" stroke="#2a9a4a" strokeWidth="1.500" /></g>, width: 'w-[18px]' },
   { icon: <g><path d="M3.500 3.500h8v8h-8zM6 6v4M9 6v4" /><path d="M9 9h4v4H9z" fill="#e5a13c" stroke="none" /></g>, width: 'w-3.5' },
   { icon: <g><path d="M3 4h7v6H3z" fill="#222a66" stroke="none" /><path d="M8 9l2 3 4-5" stroke="#2a84c8" strokeWidth="2" /></g>, width: 'w-3.5' },
   { icon: <g><path d="M3.500 3.500h9v8h-9zM5 6l3 3 2-3 2 3" /><path d="M10 13l2-4 2 4z" fill="#e5853c" stroke="none" /></g>, width: 'w-[18px]' },
   { icon: <path d="M3.500 4.500h10v8h-10zM6 9.500v1h2M9 6.500h2v2" />, width: 'w-[22px]' },
   { icon: <path d="M3 4.500h10M3 8.500h10M3 12.500h10" strokeWidth="1.500" />, width: 'w-[15px]' },
];

function StatusBar() {
   return (
      <footer className="flex h-5 shrink-0 justify-end bg-[#d7d7d7] py-px">
         <div className="flex items-center bg-[#f4f4f4]">
            {statusItems.map((item, i) => (
               <button
                  key={i}
                  aria-label={item.text ?? `Status ${i}`}
                  className={clsx(
                     'flex h-4 items-center justify-center overflow-hidden whitespace-nowrap',
                     item.width,
                     item.active && 'bg-[#cfe3f3] outline -outline-offset-1 outline-[#6f9fc4]',
                  )}
               >
                  {item.icon && <Icon>{item.icon}</Icon>}
                  {item.text}
                  {item.caret && <Caret large />}
               </button>
            ))}
         </div>
      </footer>
   );
}

/* ---------- windows taskbar ---------- */

const taskbarApps: { label: string; icon: ReactNode; open?: boolean; active?: boolean }[] = [
   { label: 'Cortana', icon: <circle cx="8" cy="8" r="4.500" stroke="#fff" strokeWidth="1.500" /> },
   { label: 'Task view', icon: <path d="M3.500 6.500h6v4h-6zM3 3v1.500h7V3M3 14v-1.500h7V14M12.500 3v11M11.500 7h2" stroke="#fff" /> },
   {
      label: 'Chrome',
      open: true,
      icon: (
         <g stroke="none">
            <circle cx="8" cy="8" r="7" fill="#e8b93c" />
            <path d="M8 8L1.900 4.500a7 7 0 0 1 12.200 0z" fill="#d94b3c" />
            <path d="M8 8L1.900 4.500A7 7 0 0 0 8 15l3-5z" fill="#3fa35a" />
            <circle cx="8" cy="8" r="3.200" fill="#fff" />
            <circle cx="8" cy="8" r="2.500" fill="#4a86e8" />
         </g>
      ),
   },
   {
      label: 'Edge',
      icon: <path d="M2 7Q3 1.500 8.500 1.500q5.500 0 5.500 7H6.500q0 4 6.500 2v3Q3 16 3 9.500 3 6 6 5 4 5 2 7zM6.500 6.500h4q0-2-2-2t-2 2z" fill="#1c7fd8" stroke="none" />,
   },
   {
      label: 'Outlook',
      open: true,
      icon: (
         <g stroke="none">
            <path d="M5 2h9v11H5z" fill="#2a9be0" />
            <path d="M9 8h6v6H6z" fill="#56c0f0" />
            <path d="M1 4h8v8H1z" fill="#0f62ac" />
            <circle cx="5" cy="8" r="2" stroke="#fff" fill="none" strokeWidth="1.300" />
         </g>
      ),
   },
   { label: 'Opera', icon: <ellipse cx="8" cy="8" rx="5" ry="5.500" stroke="#e0182d" strokeWidth="3" /> },
   {
      label: 'File Explorer',
      icon: (
         <g stroke="none">
            <path d="M1 3h5l1 1h7v10H1z" fill="#e8b93c" />
            <path d="M1 6h14v8H1z" fill="#f7dc82" />
            <path d="M4 14v-4h8v4h-2v-2H6v2z" fill="#4a9bd8" />
         </g>
      ),
   },
   {
      label: 'AutoCAD',
      open: true,
      active: true,
      icon: (
         <g stroke="none">
            <path d="M0 0h16v16H0z" fill="#f6eded" />
            <path d="M3 13L7 2h2.500l4 11-2.500-.5-1-2.500H6.500l-1 2.500zM7.200 8h2L8.200 5z" fill="#a8142c" fillRule="evenodd" />
         </g>
      ),
   },
   {
      label: 'Camtasia',
      open: true,
      icon: (
         <g stroke="none">
            <path d="M0 0h16v16H0z" fill="#fbfbfb" />
            <path d="M12 3.500H5v9h7" fill="none" stroke="#222" strokeWidth="2" />
            <path d="M5 3v5" stroke="#5ea838" strokeWidth="2" />
         </g>
      ),
   },
];

const trayIcons: ReactNode[] = [
   <path d="M4 10l4-4 4 4" strokeWidth="1.500" />,
   <g><path d="M4.500 6.500h8v4h-8z" /><path d="M7 7h5v3H7zM2 4h3v3H3z" fill="#fff" stroke="none" /></g>,
   <g stroke="#b8c0c8"><path d="M4 12Q4 5 12 4M7 12q0-4 5-5M9 12q0-2 3-2" /></g>,
   <g><path d="M3 6.500h2l3-3v9l-3-3H3z" /><path d="M10 6q1 2 0 4M12 5q2 3 0 6" /></g>,
   <path d="M5 3l3 2-3 2-3-2zM11 3l3 2-3 2-3-2zM5 7l3 2-3 2-3-2zM11 7l3 2-3 2-3-2zM8 10l2.500 1.500L8 13l-2.500-1.500z" fill="#fff" stroke="none" />,
];

function Taskbar() {
   return (
      <div className="flex h-[27px] shrink-0 bg-linear-to-r from-[#24363f] via-[#24374a] to-[#1a2640] text-white">
         <button aria-label="Start menu" className="flex w-8 items-center justify-center">
            <svg viewBox="0 0 12 12" className="size-3" fill="#fff" aria-hidden="true">
               <path d="M0 1.500L5.500.8v4.900H0zM6.200.7L12 0v5.700H6.200zM0 6.300h5.500v4.900L0 10.500zM6.200 6.300H12V12l-5.800-.7z" />
            </svg>
         </button>
         <label className="flex w-[229px] items-center gap-1 bg-[#f2f2f2] pl-1.5 text-black">
            <Icon stroke="#222"><circle cx="9.500" cy="6" r="4" /><path d="M6.500 9L2 13.500" strokeWidth="1.300" /></Icon>
            <input aria-label="Search" placeholder="Search" className="min-w-0 flex-1 bg-transparent text-[10px] placeholder:text-[#222]" />
         </label>
         <div className="flex w-[295px]">
            {taskbarApps.map((app) => (
               <button
                  key={app.label}
                  aria-label={app.label}
                  className={clsx(
                     'flex flex-1 items-center justify-center border-b-2 pt-0.5',
                     app.open ? 'border-[#7ab8e0]' : 'border-transparent',
                     app.active && 'bg-[#4d5a66]',
                  )}
               >
                  <Icon>{app.icon}</Icon>
               </button>
            ))}
         </div>
         <div className="ml-auto flex items-center">
            {trayIcons.map((icon, i) => (
               <button key={i} aria-label={`Tray ${i}`} className="flex">
                  <Icon stroke="#fff">{icon}</Icon>
               </button>
            ))}
            <span className="ml-1">ENG</span>
            <div className="ml-2 text-center leading-3">
               <div>10:28</div>
               <div>17/02/2020</div>
            </div>
            <button aria-label="Notifications" className="relative mr-3 ml-2 flex h-4 w-4">
               <Icon stroke="#fff"><path d="M2 2h11v8H6l-2 2v-2H2z" fill="#fff" /><path d="M4 4.500h7M4 7h7" stroke="#1a2640" /></Icon>
               <span className="absolute top-1.5 left-1 flex h-2.5 w-3 items-center justify-center rounded-full border border-white bg-[#1a2640]">
                  23
               </span>
            </button>
         </div>
      </div>
   );
}

export default function App() {
   return (
      <div className="flex h-screen flex-col overflow-hidden bg-[#fafafa] font-[Roboto,sans-serif] text-[8px] leading-3 text-[#222]">
         <div className="mb-0.5 flex min-h-0 flex-1 flex-col border-l border-[#ccc] pr-[5px] pl-[3px]">
            <Header />
            <Ribbon />
            <FileTabs />
            <Workspace />
            <StatusBar />
         </div>
         <Taskbar />
      </div>
   );
}
